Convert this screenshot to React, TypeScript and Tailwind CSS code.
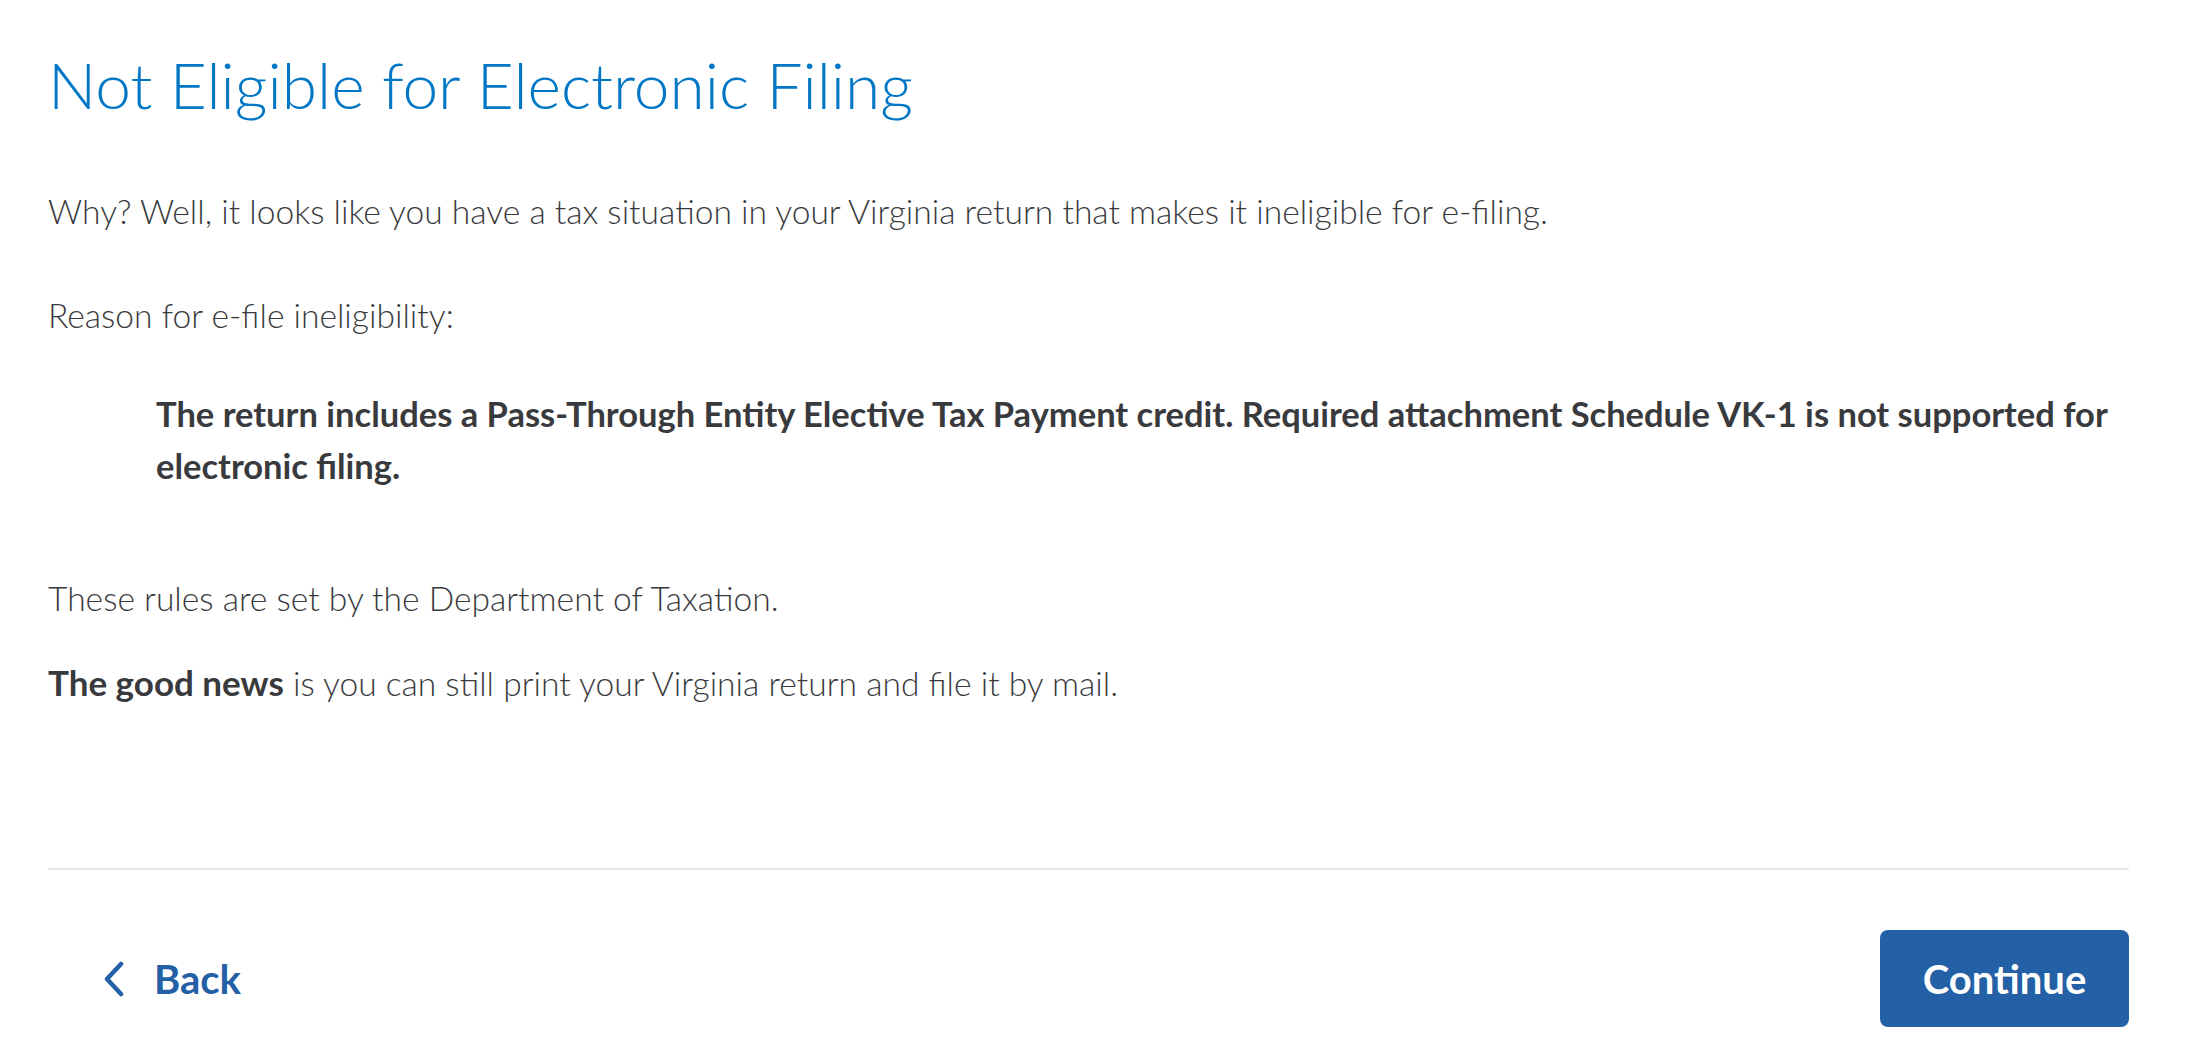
import React from "react";

export default function App() {
  return (
    <div className="min-h-screen bg-white pl-[48px] pr-[56px] font-['Lato',sans-serif] font-light text-[#393a3d]">
      <h1 className="pt-[47px] text-[64px] leading-[76px] font-light text-[#0077c5]">
        Not Eligible for Electronic Filing
      </h1>
      <p className="mt-[66px] text-[33.6px] leading-[44px]">
        Why? Well, it looks like you have a tax situation in your Virginia return that makes it ineligible for e-filing.
      </p>
      <p className="mt-[60px] text-[33.6px] leading-[44px]">Reason for e-file ineligibility:</p>
      <p className="mt-[51px] pl-[108px] text-[34.5px] leading-[52px] font-bold">
        The return includes a Pass-Through Entity Elective Tax Payment credit. Required attachment Schedule VK-1 is not supported for electronic filing.
      </p>
      <p className="mt-[84px] text-[33.6px] leading-[44px]">These rules are set by the Department of Taxation.</p>
      <p className="mt-[40px] text-[33.6px] leading-[44px]">
        <span className="text-[35px] font-bold">The good news</span> is you can still print your Virginia return and file it by mail.
      </p>
      <div className="mt-[163px] border-t-2 border-[#e8e8e8]" />
      <div className="mt-[60px] flex items-center justify-between">
        <button className="flex items-center gap-[30px] pl-[56px] text-[40px] font-bold text-[#2360a5]">
          <svg width="20" height="36" viewBox="0 0 20 36" fill="none">
            <path d="M17 3 L3 18 L17 33" stroke="#2360a5" strokeWidth="4.5" strokeLinecap="round" strokeLinejoin="round" />
          </svg>
          Back
        </button>
        <button className="h-[97px] w-[249px] rounded-[8px] bg-[#2360a5] text-[40px] font-bold text-white">
          Continue
        </button>
      </div>
    </div>
  );
}
